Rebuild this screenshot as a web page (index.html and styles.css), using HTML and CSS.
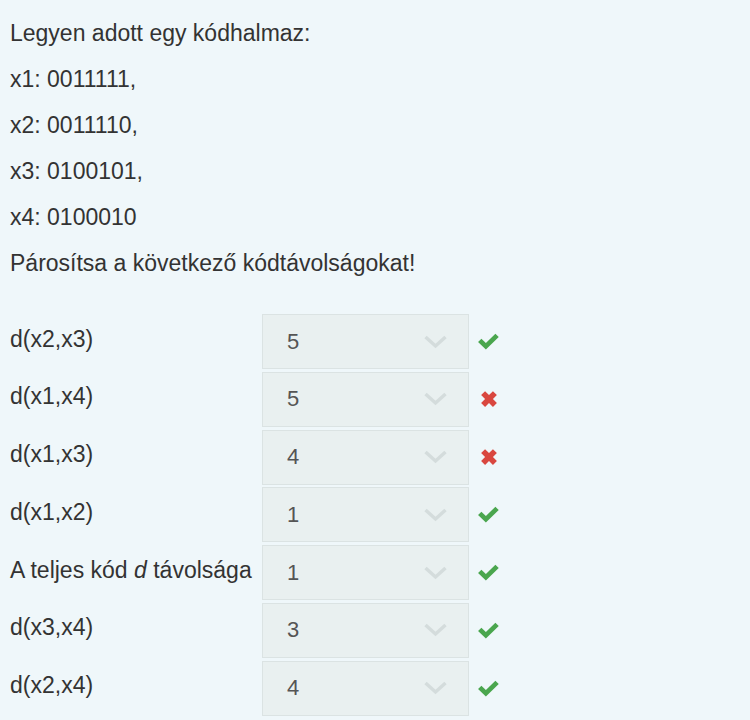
FILE: index.html
```html
<!DOCTYPE html>
<html lang="hu">
<head>
<meta charset="utf-8">
<link rel="stylesheet" href="styles.css">
</head>
<body>
<div class="question">
  <div class="intro">
    <p>Legyen adott egy kódhalmaz:</p>
    <p>x1: 0011111,</p>
    <p>x2: 0011110,</p>
    <p>x3: 0100101,</p>
    <p>x4: 0100010</p>
    <p>Párosítsa a következő kódtávolságokat!</p>
  </div>
  <div class="matches">
    <div class="row"><div class="label">d(x2,x3)</div><div class="select"><span>5</span><svg class="chev" viewBox="0 0 24 14"><path d="M2 2 L12 11 L22 2" /></svg></div><svg class="mark ok" viewBox="0 0 22 16"><path d="M1 8.5 L4.2 5.3 L8.5 9.4 L17.6 0.6 L20.8 3.8 L8.5 15.6 Z"/></svg></div>
    <div class="row"><div class="label">d(x1,x4)</div><div class="select"><span>5</span><svg class="chev" viewBox="0 0 24 14"><path d="M2 2 L12 11 L22 2" /></svg></div><svg class="mark bad" viewBox="0 0 16 16"><path d="M1 4.5 L4.5 1 L8 4.5 L11.5 1 L15 4.5 L11.5 8 L15 11.5 L11.5 15 L8 11.5 L4.5 15 L1 11.5 L4.5 8 Z"/></svg></div>
    <div class="row"><div class="label">d(x1,x3)</div><div class="select"><span>4</span><svg class="chev" viewBox="0 0 24 14"><path d="M2 2 L12 11 L22 2" /></svg></div><svg class="mark bad" viewBox="0 0 16 16"><path d="M1 4.5 L4.5 1 L8 4.5 L11.5 1 L15 4.5 L11.5 8 L15 11.5 L11.5 15 L8 11.5 L4.5 15 L1 11.5 L4.5 8 Z"/></svg></div>
    <div class="row"><div class="label">d(x1,x2)</div><div class="select"><span>1</span><svg class="chev" viewBox="0 0 24 14"><path d="M2 2 L12 11 L22 2" /></svg></div><svg class="mark ok" viewBox="0 0 22 16"><path d="M1 8.5 L4.2 5.3 L8.5 9.4 L17.6 0.6 L20.8 3.8 L8.5 15.6 Z"/></svg></div>
    <div class="row"><div class="label">A teljes kód <i>d</i> távolsága</div><div class="select"><span>1</span><svg class="chev" viewBox="0 0 24 14"><path d="M2 2 L12 11 L22 2" /></svg></div><svg class="mark ok" viewBox="0 0 22 16"><path d="M1 8.5 L4.2 5.3 L8.5 9.4 L17.6 0.6 L20.8 3.8 L8.5 15.6 Z"/></svg></div>
    <div class="row"><div class="label">d(x3,x4)</div><div class="select"><span>3</span><svg class="chev" viewBox="0 0 24 14"><path d="M2 2 L12 11 L22 2" /></svg></div><svg class="mark ok" viewBox="0 0 22 16"><path d="M1 8.5 L4.2 5.3 L8.5 9.4 L17.6 0.6 L20.8 3.8 L8.5 15.6 Z"/></svg></div>
    <div class="row"><div class="label">d(x2,x4)</div><div class="select"><span>4</span><svg class="chev" viewBox="0 0 24 14"><path d="M2 2 L12 11 L22 2" /></svg></div><svg class="mark ok" viewBox="0 0 22 16"><path d="M1 8.5 L4.2 5.3 L8.5 9.4 L17.6 0.6 L20.8 3.8 L8.5 15.6 Z"/></svg></div>
  </div>
</div>
</body>
</html>
```
FILE: styles.css
```css
html, body {
  background: #eff7fa;
}
body {
  margin: 0;
  font-family: "Liberation Sans", Arial, sans-serif;
  font-size: 23px;
  color: #333;
}
.question {
  padding: 10px 0 0 10px;
}
.intro p {
  margin: 0;
  line-height: 46px;
}
.matches {
  margin-top: 28px;
  display: flex;
  flex-direction: column;
  gap: 2.8px;
}
.row {
  display: flex;
  align-items: center;
}
.label {
  width: 252px;
  margin-top: -5px;
  white-space: nowrap;
}
.select {
  box-sizing: border-box;
  width: 207px;
  height: 55px;
  background: #e9f0f0;
  border: 1px solid #dbe3e3;
  display: flex;
  align-items: center;
  justify-content: space-between;
  padding: 0 20px 0 24px;
  color: #555;
  font-size: 22px;
}
.chev {
  width: 25px;
  height: 14px;
}
.chev path {
  fill: none;
  stroke: #d4dcdc;
  stroke-width: 3.5;
}
.mark {
  margin-left: 8px;
}
.mark.ok {
  width: 23px;
  height: 17px;
  fill: #4aa64e;
}
.mark.bad {
  width: 18px;
  height: 18px;
  margin-left: 11px;
  fill: #d9473f;
}
```
